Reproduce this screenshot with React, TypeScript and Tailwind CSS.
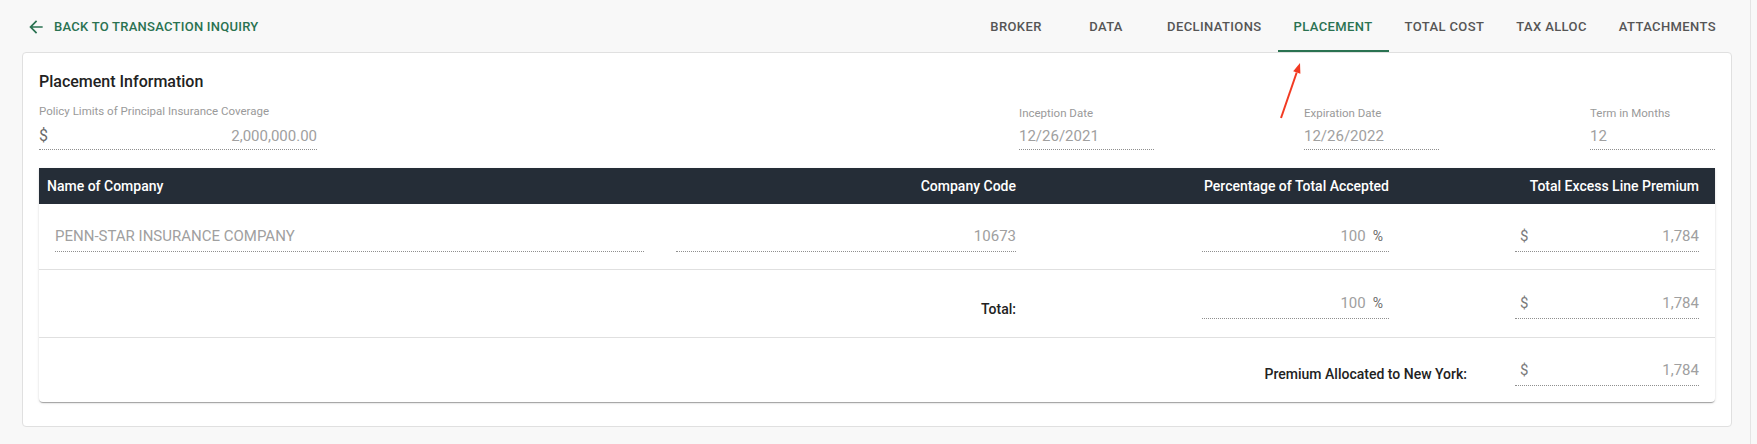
import React from "react";

type InputProps = {
  value: string;
  prefix?: string;
  suffix?: string;
  left?: boolean;
  compact?: boolean;
};

function Input({ value, prefix, suffix, left, compact }: InputProps) {
  return (
    <div
      className={
        "flex w-full items-center border-b border-dotted border-[#8f8f8f] text-[15px] leading-[18px] text-[#a0a0a0] " +
        (compact ? "pb-[4px]" : "pb-[6px]")
      }
    >
      {prefix && <span className="pl-[5px] text-[#7a7a7a]">{prefix}</span>}
      <span className={"flex-1 " + (left ? "text-left" : "text-right")}>{value}</span>
      {suffix && <span className="ml-[7px] pr-[6px] text-[14px] text-[#6a6a6a]">{suffix}</span>}
    </div>
  );
}

function TopField({ label, value, prefix, width, shift }: { label: string; value: string; prefix?: string; width: string; shift?: boolean }) {
  return (
    <div className={width}>
      <div className={"text-[11.5px] leading-4 text-[#9a9a9a] " + (shift ? "mt-[2px] mb-[6px]" : "mb-2")}>{label}</div>
      {prefix ? (
        <div className="flex w-full items-center border-b border-dotted border-[#8f8f8f] pb-[4px] text-[15px] leading-[18px] text-[#a0a0a0]">
          <span className="text-[16px] text-[#6a6a6a]">{prefix}</span>
          <span className="flex-1 text-right">{value}</span>
        </div>
      ) : (
        <Input value={value} left compact />
      )}
    </div>
  );
}

const tabs = ["Broker", "Data", "Declinations", "Placement", "Total Cost", "Tax Alloc", "Attachments"];

export default function App() {
  return (
    <div className="relative flex min-h-[444px] w-full bg-[#f8f8f8] font-['Roboto',sans-serif]">
      <div className="flex-1 pl-[22px] pr-[18px]">
        {/* Top bar */}
        <div className="flex h-[52px] items-stretch justify-between">
          <div className="flex items-center gap-[8px] pl-[4px] pt-[2px] text-[13px] font-medium uppercase tracking-[0.02em] text-[#2a7251]">
            <svg width="20" height="20" viewBox="0 0 24 24" fill="#2a7251">
              <path d="M20 11H7.83l5.59-5.59L12 4l-8 8 8 8 1.41-1.41L7.83 13H20v-2z" />
            </svg>
            <span>Back to Transaction Inquiry</span>
          </div>
          <nav className="flex">
            {tabs.map((t) => (
              <div
                key={t}
                className={
                  "flex min-w-[90px] items-center justify-center border-b-2 px-4 pt-1 text-[13px] font-medium uppercase tracking-[0.03em] " +
                  (t === "Placement" ? "border-[#2a7251] text-[#2a7251]" : "border-transparent text-[#555555]")
                }
              >
                {t}
              </div>
            ))}
          </nav>
        </div>

        {/* Card */}
        <div className="rounded-[4px] border border-[#e0e0e0] bg-white px-4 pb-[24px] pt-[17px]">
          <div className="mb-[9px] text-[16px] font-medium leading-6 text-[#222222]">Placement Information</div>

          <div className="flex items-start">
            <TopField label="Policy Limits of Principal Insurance Coverage" value="2,000,000.00" prefix="$" width="w-[278px]" />
            <div className="ml-auto flex">
              <TopField label="Inception Date" value="12/26/2021" width="w-[135px]" shift />
              <div className="ml-[150px]">
                <TopField label="Expiration Date" value="12/26/2022" width="w-[135px]" shift />
              </div>
              <div className="ml-[151px]">
                <TopField label="Term in Months" value="12" width="w-[125px]" shift />
              </div>
            </div>
          </div>

          {/* Table */}
          <div className="mt-[18px] overflow-hidden rounded-b-[4px] bg-white shadow-[0_2px_1px_-1px_rgba(0,0,0,0.2),0_1px_1px_0_rgba(0,0,0,0.14),0_1px_3px_0_rgba(0,0,0,0.12)]">
            <div className="grid h-9 grid-cols-[637px_340px_373px_1fr] items-center bg-[#252d37] pr-4 text-[14px] font-medium text-white">
              <div className="pl-2">Name of Company</div>
              <div className="text-right">Company Code</div>
              <div className="text-right">Percentage of Total Accepted</div>
              <div className="text-right">Total Excess Line Premium</div>
            </div>

            <div className="grid grid-cols-[637px_340px_373px_1fr] items-end border-b border-[#e0e0e0] pb-[17px] pr-4 pt-[23px]">
              <div className="pl-4 pr-8">
                <Input value="PENN-STAR INSURANCE COMPANY" left />
              </div>
              <div>
                <Input value="10673" />
              </div>
              <div className="flex justify-end">
                <div className="w-[187px]">
                  <Input value="100" suffix="%" />
                </div>
              </div>
              <div className="flex justify-end">
                <div className="w-[184px]">
                  <Input value="1,784" prefix="$" />
                </div>
              </div>
            </div>

            <div className="grid grid-cols-[637px_340px_373px_1fr] items-end border-b border-[#e0e0e0] pb-[18px] pr-4 pt-[24px]">
              <div />
              <div className="text-right text-[14px] font-medium leading-5 text-[#222222]">Total:</div>
              <div className="flex justify-end">
                <div className="w-[187px]">
                  <Input value="100" suffix="%" />
                </div>
              </div>
              <div className="flex justify-end">
                <div className="w-[184px]">
                  <Input value="1,784" prefix="$" />
                </div>
              </div>
            </div>

            <div className="flex items-end justify-end pb-[16px] pr-4 pt-[23px]">
              <div className="mb-[2px] mr-12 text-[14px] font-medium leading-5 text-[#222222]">Premium Allocated to New York:</div>
              <div className="w-[184px]">
                <Input value="1,784" prefix="$" />
              </div>
            </div>
          </div>
        </div>
      </div>
      <div className="w-[7px] border-l border-[#e4e4e4]" />

      {/* annotation arrow */}
      <svg className="absolute left-[1271px] top-[55px]" width="40" height="70" viewBox="0 0 40 70">
        <line x1="10" y1="63" x2="25.7" y2="17.5" stroke="#f23a22" strokeWidth="2" />
        <polygon points="29,8 29.4,18.8 22.2,16.3" fill="#f23a22" />
      </svg>
    </div>
  );
}
